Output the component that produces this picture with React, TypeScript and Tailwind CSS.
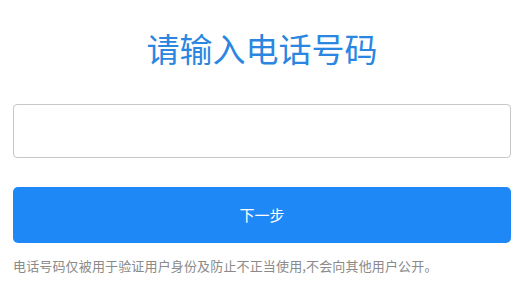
export default function App() {
  return (
    <div
      className="flex h-[295px] w-[517px] flex-col bg-white pr-[6px] pl-[13px]"
      style={{ fontFamily: '"Noto Sans CJK SC", "Noto Sans", sans-serif' }}
    >
      <h1 className="mt-[26px] text-center text-[33px] leading-[44px] font-normal text-[#2a86e0]">
        请输入电话号码
      </h1>
      <input
        type="tel"
        className="mt-[34px] h-[54px] w-full rounded-[4px] border border-[#c8c8c8] px-3 text-base outline-none"
      />
      <button className="mt-[29px] h-[56px] w-full rounded-[5px] bg-[#1f88f7] text-[15px] text-white">
        下一步
      </button>
      <p className="mt-[14px] text-[13px] leading-[18px] tracking-[0.15px] text-[#8a8a8a]">
        电话号码仅被用于验证用户身份及防止不正当使用,不会向其他用户公开。
      </p>
    </div>
  );
}
